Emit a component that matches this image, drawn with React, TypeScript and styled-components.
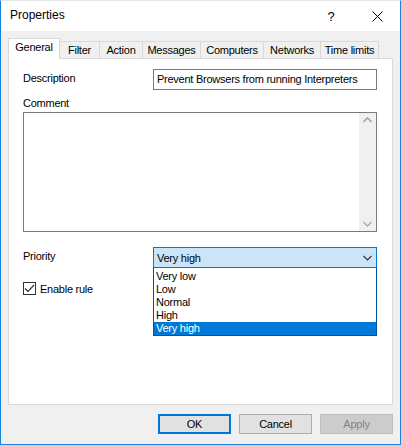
import { FC } from 'react'
import styled, { createGlobalStyle } from 'styled-components'

const GlobalStyle = createGlobalStyle`
  html, body {
    margin: 0;
    padding: 0;
    background: #ffffff;
  }
  * {
    box-sizing: border-box;
  }
`

const Window = styled.div`
  width: 401px;
  height: 445px;
  display: flex;
  flex-direction: column;
  border: 1px solid #1883d7;
  border-top-color: #e6e6e6;
  background: #f0f0f0;
  font-family: "Liberation Sans", Arial, sans-serif;
  font-size: 11px;
  letter-spacing: -0.25px;
  color: #000;
`

const TitleBar = styled.div`
  height: 30px;
  display: flex;
  align-items: center;
  background: #ffffff;
  padding-left: 9px;
`

const Title = styled.span`
  font-size: 12px;
  letter-spacing: 0;
  flex: 1;
  padding-bottom: 2px;
`

const CaptionButton = styled.div`
  width: 46px;
  height: 30px;
  display: flex;
  align-items: center;
  justify-content: center;
  font-size: 13px;
`

const Body = styled.div`
  flex: 1;
  display: flex;
  flex-direction: column;
  padding: 7px 7px 0 7px;
`

const TabStrip = styled.div`
  display: flex;
  align-items: flex-end;
  height: 21px;
  margin-bottom: -1px;
  position: relative;
  z-index: 1;
`

const Tab = styled.div<{ $w: number; $active?: boolean }>`
  width: ${({ $w }) => $w}px;
  height: ${({ $active }) => ($active ? 21 : 18)}px;
  margin-left: ${({ $active }) => ($active ? 0 : -1)}px;
  display: flex;
  align-items: center;
  justify-content: center;
  padding-bottom: ${({ $active }) => ($active ? 4 : 1)}px;
  background: ${({ $active }) => ($active ? '#ffffff' : '#f0f0f0')};
  border: 1px solid #d9d9d9;
  border-bottom: ${({ $active }) => ($active ? 'none' : '1px solid #d9d9d9')};
  position: relative;
  z-index: ${({ $active }) => ($active ? 2 : 1)};
  white-space: nowrap;
  &:first-child {
    margin-left: 0;
  }
`

const Panel = styled.div`
  height: 347px;
  background: #ffffff;
  border: 1px solid #d9d9d9;
  padding: 10px 13px 0 14px;
  display: flex;
  flex-direction: column;
`

const FieldRow = styled.div`
  display: grid;
  grid-template-columns: 130px 224px;
  align-items: center;
`

const Label = styled.span`
  line-height: 13px;
  padding-bottom: 3px;
`

const TextBox = styled.div`
  height: 21px;
  border: 1px solid #7a7a7a;
  display: flex;
  align-items: center;
  padding: 0 0 1px 3px;
  white-space: nowrap;
`

const CommentLabel = styled(Label)`
  margin-top: 7px;
  margin-bottom: 2px;
  padding-bottom: 0;
`

const TextArea = styled.div`
  width: 354px;
  height: 120px;
  border: 1px solid #7a7a7a;
  display: flex;
  justify-content: flex-end;
`

const ScrollTrack = styled.div`
  width: 17px;
  background: #f0f0f0;
  display: flex;
  flex-direction: column;
  justify-content: space-between;
  align-items: center;
  padding: 4px 0;
`

const SelectWrap = styled.div`
  position: relative;
`

const Select = styled.div`
  height: 21px;
  border: 1px solid #0078d7;
  background: #cce4f7;
  display: flex;
  align-items: center;
  justify-content: space-between;
  padding: 0 4px 0 3px;
`

const DropList = styled.div`
  position: absolute;
  top: 21px;
  left: 0;
  width: 224px;
  border: 1px solid #005499;
  border-top: none;
  background: #ffffff;
  padding-top: 2px;
`

const ListItem = styled.div<{ $selected?: boolean }>`
  height: 13px;
  line-height: 13px;
  padding-left: 2px;
  background: ${({ $selected }) => ($selected ? '#0078d7' : 'transparent')};
  color: ${({ $selected }) => ($selected ? '#ffffff' : '#000000')};
`

const PriorityRow = styled(FieldRow)`
  margin-top: 15px;
`

const CheckRow = styled.label`
  display: flex;
  align-items: center;
  gap: 4px;
  margin-top: 14px;
`

const CheckBox = styled.div`
  width: 13px;
  height: 13px;
  border: 1px solid #333333;
  background: #ffffff;
  display: flex;
  align-items: center;
  justify-content: center;
`

const ButtonRow = styled.div`
  display: flex;
  justify-content: flex-end;
  gap: 8px;
  padding-top: 9px;
`

const Button = styled.div<{ $primary?: boolean; $disabled?: boolean }>`
  width: 73px;
  height: 20px;
  display: flex;
  align-items: center;
  justify-content: center;
  background: ${({ $disabled }) => ($disabled ? '#cccccc' : '#e1e1e1')};
  border: ${({ $primary, $disabled }) =>
    $primary ? '2px solid #0078d7' : `1px solid ${$disabled ? '#bfbfbf' : '#adadad'}`};
  color: ${({ $disabled }) => ($disabled ? '#838383' : '#000000')};
`

const tabs = [
  { label: 'General', w: 52 },
  { label: 'Filter', w: 41 },
  { label: 'Action', w: 44 },
  { label: 'Messages', w: 59 },
  { label: 'Computers', w: 64 },
  { label: 'Networks', w: 58 },
  { label: 'Time limits', w: 59 },
]

const priorities = ['Very low', 'Low', 'Normal', 'High', 'Very high']

const Chevron: FC<{ up?: boolean; color: string }> = ({ up, color }) => (
  <svg width="9" height="6" viewBox="0 0 9 6">
    <path
      d={up ? 'M0.5 5 L4.5 1 L8.5 5' : 'M0.5 1 L4.5 5 L8.5 1'}
      fill="none"
      stroke={color}
      strokeWidth={up ? 1.6 : 1.1}
    />
  </svg>
)

export default function App() {
  return (
    <>
      <GlobalStyle />
      <Window>
        <TitleBar>
          <Title>Properties</Title>
          <CaptionButton>?</CaptionButton>
          <CaptionButton>
            <svg width="11" height="11" viewBox="0 0 11 11">
              <path d="M0.5 0.5 L10.5 10.5 M10.5 0.5 L0.5 10.5" stroke="#000" strokeWidth="1" />
            </svg>
          </CaptionButton>
        </TitleBar>
        <Body>
          <TabStrip>
            {tabs.map((t, i) => (
              <Tab key={t.label} $w={t.w} $active={i === 0}>
                {t.label}
              </Tab>
            ))}
          </TabStrip>
          <Panel>
            <FieldRow>
              <Label>Description</Label>
              <TextBox>Prevent Browsers from running Interpreters</TextBox>
            </FieldRow>
            <CommentLabel>Comment</CommentLabel>
            <TextArea>
              <ScrollTrack>
                <Chevron up color="#a3a3a3" />
                <Chevron color="#a3a3a3" />
              </ScrollTrack>
            </TextArea>
            <PriorityRow>
              <Label>Priority</Label>
              <SelectWrap>
                <Select>
                  <span>Very high</span>
                  <Chevron color="#333" />
                </Select>
                <DropList>
                  {priorities.map(p => (
                    <ListItem key={p} $selected={p === 'Very high'}>
                      {p}
                    </ListItem>
                  ))}
                </DropList>
              </SelectWrap>
            </PriorityRow>
            <CheckRow>
              <CheckBox>
                <svg width="11" height="9" viewBox="0 0 11 9">
                  <path d="M1 4.5 L4 7.5 L10 1" fill="none" stroke="#333" strokeWidth="1.2" />
                </svg>
              </CheckBox>
              <span>Enable rule</span>
            </CheckRow>
          </Panel>
          <ButtonRow>
            <Button $primary>OK</Button>
            <Button>Cancel</Button>
            <Button $disabled>Apply</Button>
          </ButtonRow>
        </Body>
      </Window>
    </>
  )
}
